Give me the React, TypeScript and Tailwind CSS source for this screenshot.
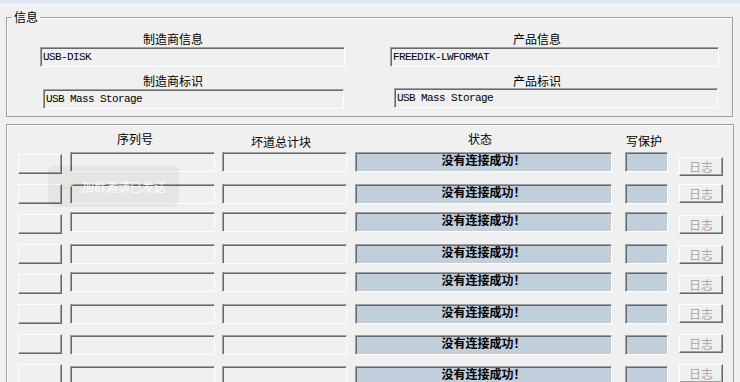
import React from 'react';
import { Check } from 'lucide-react';

const sunken = 'border-t border-l border-t-[#a0a0a0] border-l-[#a0a0a0] border-b border-r border-b-white border-r-white shadow-[inset_1px_1px_0_#696969]';
const raised = 'border-t border-l border-t-white border-l-white border-b border-r border-b-[#696969] border-r-[#696969] shadow-[inset_-1px_-1px_0_#a0a0a0] bg-[#f0f0f0]';

// row heights and per-control vertical nudges, as laid out in the original dialog
const rows = [
  { h: 'h-[32px]', f: 'mt-0', b: 'mt-[2px]', l: 'mt-[5px]' },
  { h: 'h-[28px]', f: 'mt-0', b: 'mt-0', l: 'mt-0' },
  { h: 'h-[32px]', f: 'mt-0', b: 'mt-[2px]', l: 'mt-[3px]' },
  { h: 'h-[28px]', f: 'mt-0', b: 'mt-0', l: 'mt-[1px]' },
  { h: 'h-[32px]', f: 'mt-0', b: 'mt-[2px]', l: 'mt-[3px]' },
  { h: 'h-[30px]', f: 'mt-0', b: 'mt-0', l: 'mt-0' },
  { h: 'h-[30px]', f: 'mt-[1px]', b: 'mt-0', l: 'mt-0' },
  { h: 'h-[30px]', f: 'mt-[2px]', b: 'mt-0', l: 'mt-0' },
];

const InfoField = ({ value, className }: { value: string; className: string }) => (
  <div className={`${sunken} h-[20px] bg-[#f0f0f0] pl-[2px] flex items-center font-['Liberation_Mono',monospace] text-[11px] tracking-[-0.6px] text-black whitespace-pre ${className}`}>
    {value}
  </div>
);

const DeviceRow = ({ row }: { row: (typeof rows)[number] }) => (
  <div className={`flex items-start ${row.h}`}>
    <div className={`${raised} ml-[11px] w-[44px] h-[20px] ${row.b}`} />
    <div className={`${sunken} ml-[8px] w-[145px] h-[20px] bg-[#f0f0f0] ${row.f}`} />
    <div className={`${sunken} ml-[7px] w-[125px] h-[20px] bg-[#f0f0f0] ${row.f}`} />
    <div className={`${sunken} ml-[8px] w-[257px] h-[20px] bg-[#c1cedb] text-center text-[12px] leading-[14px] font-bold text-black ${row.f}`}>
      没有连接成功！
    </div>
    <div className={`${sunken} ml-[13px] w-[43px] h-[20px] bg-[#c1cedb] ${row.f}`} />
    <div className={`${raised} ml-[11px] w-[44px] h-[19px] flex items-center justify-center text-[12px] text-[#a8a8a8] ${row.l}`}>
      日志
    </div>
  </div>
);

const App = () => {
  return (
    <div className="relative w-[740px] h-[382px] overflow-hidden bg-[#f0f0f0] font-['Noto_Sans_CJK_SC','Noto_Sans',sans-serif] text-[12px] text-black">
      {/* title bar remnant */}
      <div className="h-[3px] bg-[#dce6f2]" />

      {/* 信息 group */}
      <fieldset className="ml-[6px] mt-[7px] w-[727px] border border-[#a0a0a0] shadow-[inset_1px_1px_0_#fff] px-0 pb-[7px]">
        <legend className="ml-[5px] px-[2px] leading-[14px] text-[12px]">信息</legend>
        <div className="flex pt-[8px]">
          <div className="ml-[33px] w-[305px] flex flex-col">
            <div className="h-[14px] leading-[14px] pl-[103px]">制造商信息</div>
            <InfoField value="USB-DISK" className="mt-[1px] w-[305px]" />
            <div className="mt-[7px] h-[14px] leading-[14px] pl-[103px]">制造商标识</div>
            <InfoField value="USB Mass Storage" className="mt-[1px] ml-[3px] w-[301px]" />
          </div>
          <div className="ml-[45px] w-[329px] flex flex-col">
            <div className="h-[14px] leading-[14px] pl-[123px]">产品信息</div>
            <InfoField value="FREEDIK-LWFORMAT" className="mt-[1px] w-[329px]" />
            <div className="mt-[7px] h-[14px] leading-[14px] pl-[123px]">产品标识</div>
            <InfoField value="USB Mass Storage" className="ml-[4px] w-[324px]" />
          </div>
        </div>
      </fieldset>

      {/* device list group */}
      <div className="ml-[6px] mt-[7px] w-[728px] h-[300px] border border-[#a0a0a0] shadow-[inset_1px_1px_0_#fff]">
        <div className="flex items-start h-[27px] leading-[14px]">
          <span className="ml-[110px] mt-[7px]">序列号</span>
          <span className="ml-[98px] mt-[10px]">坏道总计块</span>
          <span className="ml-[157px] mt-[7px]">状态</span>
          <span className="ml-[134px] mt-[9px]">写保护</span>
        </div>
        <div className="flex flex-col">
          {rows.map((row, i) => (
            <DeviceRow key={i} row={row} />
          ))}
        </div>
      </div>

      {/* fading toast */}
      <div className="absolute left-[48px] top-[166px] w-[131px] h-[41px] rounded-[6px] bg-black/[0.045] flex items-center pl-[13px] gap-[6px]">
        <Check className="w-[15px] h-[15px] text-[#cfe5c4]" strokeWidth={3} />
        <span className="text-[12px] text-white/90">加群邀请已发送</span>
      </div>
    </div>
  );
};

export default App;
